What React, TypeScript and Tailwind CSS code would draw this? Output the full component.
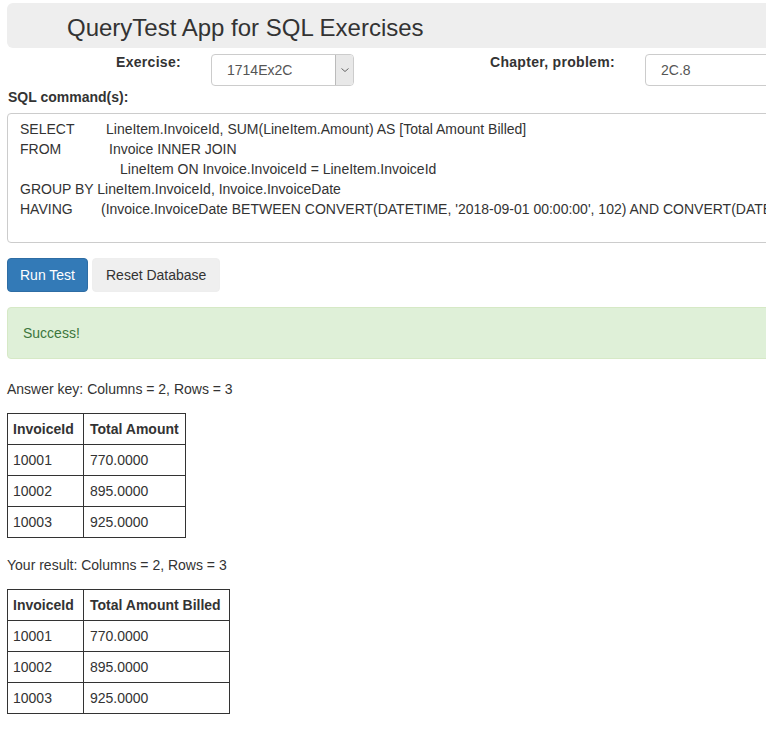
import React from 'react';

const rows = [
  ['10001', '770.0000'],
  ['10002', '895.0000'],
  ['10003', '925.0000'],
];

const ResultTable = ({ header, col2 }: { header: string; col2: string }) => (
  <table className="border-collapse">
    <thead>
      <tr>
        <th className="w-[76px] border border-[#333] px-[5px] py-[5px] text-left font-bold leading-5">InvoiceId</th>
        <th className={`${col2} border border-[#333] px-[6px] py-[5px] text-left font-bold leading-5`}>{header}</th>
      </tr>
    </thead>
    <tbody>
      {rows.map((r) => (
        <tr key={r[0]}>
          <td className="border border-[#333] px-[5px] py-[5px] leading-5">{r[0]}</td>
          <td className="border border-[#333] px-[6px] py-[5px] leading-5">{r[1]}</td>
        </tr>
      ))}
    </tbody>
  </table>
);

export default function App() {
  return (
    <div className="w-full min-h-[730px] overflow-hidden bg-white text-[14px] leading-5 text-[#333]" style={{ fontFamily: '"Liberation Sans", Arial, sans-serif' }}>
      <div className="w-[1000px] pl-[7px] pt-[3px]">
        {/* Cabecera */}
        <div className="flex h-[45px] items-center rounded-[6px] bg-[#eee] pl-[60px]">
          <h1 className="mt-[4px] text-[24px] leading-none font-normal text-[#333]">QueryTest App for SQL Exercises</h1>
        </div>

        {/* Ejercicio y capítulo */}
        <div className="mt-[4px] flex items-start">
          <label className="ml-[109px] w-[95px] font-bold tracking-[0.3px]">Exercise:</label>
          <div className="mt-[2px] flex h-[32px] w-[143px] items-stretch overflow-hidden rounded-[4px] border border-[#ccc] bg-white">
            <span className="flex flex-1 items-center pl-[15px] text-[#555]">1714Ex2C</span>
            <span className="flex w-[18px] items-center justify-center border-l border-[#bbb] bg-[#e8e8e8]">
              <svg width="8" height="6" viewBox="0 0 8 6" fill="none" stroke="#666" strokeWidth="1">
                <path d="M0.5 1.5 L4 4.5 L7.5 1.5" />
              </svg>
            </span>
          </div>
          <label className="ml-[136px] w-[155px] font-bold tracking-[0.3px]">Chapter, problem:</label>
          <div className="mt-[2px] flex h-[32px] w-[300px] items-center rounded-[4px] border border-[#ccc] bg-white pl-[15px] text-[#555]">
            2C.8
          </div>
        </div>

        <div className="mt-[1px] pl-[1px] font-bold">SQL command(s):</div>

        {/* Comando SQL */}
        <div className="mt-[6px] h-[130px] rounded-[4px] border border-[#ccc] bg-white pl-[12px] pt-[5px] text-[#333] whitespace-nowrap">
          <div><span className="inline-block w-[86px]">SELECT</span>LineItem.InvoiceId, SUM(LineItem.Amount) AS [Total Amount Billed]</div>
          <div><span className="inline-block w-[89px]">FROM</span>Invoice INNER JOIN</div>
          <div className="pl-[100px]">LineItem ON Invoice.InvoiceId = LineItem.InvoiceId</div>
          <div>GROUP BY LineItem.InvoiceId, Invoice.InvoiceDate</div>
          <div><span className="inline-block w-[81px]">HAVING</span>(Invoice.InvoiceDate BETWEEN CONVERT(DATETIME, '2018-09-01 00:00:00', 102) AND CONVERT(DATETIME, '2018-09-30 00:00:00', 102))</div>
        </div>

        {/* Botones */}
        <div className="mt-[15px] flex gap-[4px]">
          <button className="h-[34px] rounded-[4px] border border-[#2e6da4] bg-[#337ab7] px-[12px] text-white">Run Test</button>
          <button className="h-[34px] rounded-[4px] border border-[#eee] bg-[#efefef] px-[13px] text-[#333]">Reset Database</button>
        </div>

        <div className="mt-[15px] h-[52px] rounded-[4px] border border-[#d6e9c6] bg-[#dff0d8] px-[15px] py-[15px] text-[#3c763d]">
          Success!
        </div>

        <p className="mt-[20px]">Answer key: Columns = 2, Rows = 3</p>
        <div className="mt-[14px]">
          <ResultTable header="Total Amount" col2="w-[102px]" />
        </div>

        <p className="mt-[17px]">Your result: Columns = 2, Rows = 3</p>
        <div className="mt-[14px]">
          <ResultTable header="Total Amount Billed" col2="w-[146px]" />
        </div>
      </div>
    </div>
  );
}
